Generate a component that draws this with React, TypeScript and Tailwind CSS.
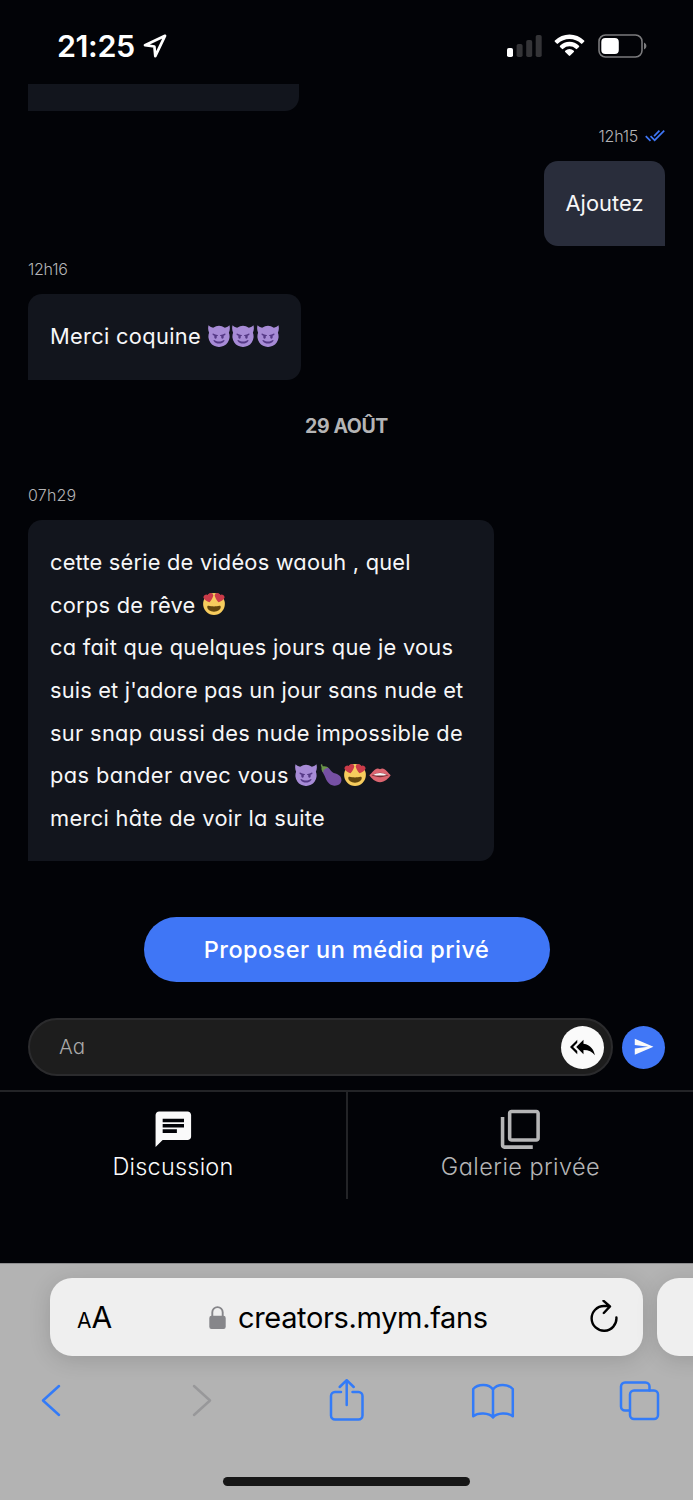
import type { ReactNode } from "react";

function Devil() {
  return (
    <svg viewBox="0 0 36 36" className="size-[22px] shrink-0" role="img" aria-label="😈">
      <path fill="#a78bd6" d="M.9.500C-.2 4.500 0 9 1.800 12.800A17.100 17.100 0 0 0 18 36a17.100 17.100 0 0 0 16.200-23.200C36 9 36.200 4.500 35.100.500 33.500 2.600 31 3.800 27.600 4.300a17.300 17.300 0 0 0-19.200 0C5 3.800 2.500 2.600.9.500z" />
      <path fill="#553986" d="M7.500 15.500c-.4-1.200.7-1.900 1.600-1.200 1.900 1.200 3.800 1.800 6.200 1.900 1.500.2 1.300 1.800-.1 1.800h-.9c.4 2.600-.3 4.500-1.900 4.500s-2.500-1.900-2-5c-1.200-.5-2.500-1-2.900-2zM28.500 15.500c.4-1.200-.7-1.900-1.600-1.200-1.900 1.200-3.800 1.800-6.200 1.900-1.500.2-1.300 1.800.1 1.800h.9c-.4 2.600.3 4.500 1.900 4.500s2.500-1.900 2-5c1.200-.5 2.500-1 2.900-2zM9.300 26c-.8-1.100.3-2 1.400-1.200 4.400 3 10.200 3 14.600 0 1.100-.8 2.200.1 1.400 1.200-4.100 5.700-13.300 5.700-17.400 0z" />
    </svg>
  );
}

function HeartEyes() {
  return (
    <svg viewBox="0 0 36 36" className="size-[22px] shrink-0" role="img" aria-label="😍">
      <circle cx="18" cy="18" r="17.800" fill="#f7cc5d" />
      <path fill="#cb3b49" d="M16.650 3.280C15.790.850 13.120-.430 10.690.430a4.660 4.660 0 0 0-2.810 2.700A4.670 4.670 0 0 0 .740 7.500c.070.280.180.550.310.800 1.040 2.520 5.320 6.200 9.550 6.980 3.200-2.870 5.420-8.060 6.210-10.590a4.690 4.690 0 0 0-.160-1.410zM19.350 3.280C20.210.850 22.880-.430 25.310.430a4.660 4.660 0 0 1 2.810 2.700 4.670 4.670 0 0 1 7.140 4.370c-.070.280-.180.550-.310.800-1.040 2.520-5.320 6.200-9.550 6.980-3.200-2.870-5.420-8.060-6.210-10.590a4.690 4.690 0 0 1 .160-1.410z" />
      <path fill="#63460d" d="M18 22c-3.620 0-6.030-.420-9-1-.680-.130-2 0-2 2 0 4 4.600 7.500 11 7.500s11-3.500 11-7.500c0-2-1.320-2.130-2-2-2.970.580-5.380 1-9 1z" />
    </svg>
  );
}

function Eggplant() {
  return (
    <svg viewBox="0 0 36 36" className="size-[22px] shrink-0" role="img" aria-label="🍆">
      <path fill="#7650a4" d="M3.500 7.500C7 3.500 13 3.800 16 8.500c2.500 4 5 5.800 9.500 7C32 17.300 36 22 35 28c-1 5.500-6 8-12 7.500-8-.7-12.500-8-15-15C6.500 16.500 2 12 3.500 7.500z" />
      <path fill="#6a9549" d="M1.600.8C2.800-.2 4.200.6 4 2c-.1.900.2 1.700 1.300 1.800 4-.5 7.200.6 8.500 3.200-2.500-.8-4-.1-5.200 1.300-.8 1-1.600 1-2.300.3-.6 1.600-1 3.500-.2 5.400C3.500 12.700 2 10 2.500 6.500 2.800 4.500.6 2.500 1.600.8z" />
    </svg>
  );
}

function Lips() {
  return (
    <svg viewBox="0 0 36 36" className="size-[22px] shrink-0" role="img" aria-label="👄">
      <path fill="#dc6570" d="M.5 18.500C5 14.500 9.500 7.500 14 7.500c1.500 0 2.800.8 4 1.200 1.200-.4 2.500-1.200 4-1.200 4.500 0 9 7 13.500 11-4 5-9.500 11.500-17.500 11.500S4.500 23.500.5 18.500z" />
      <path fill="#7c2a32" d="M4 18.500c4.500-1.500 9-4 14-4s9.500 2.500 14 4c-4.500 1.300-9 3.300-14 3.300s-9.500-2-14-3.300z" />
      <path fill="#f5f5f5" d="M6.500 17.800c3.800-1.300 7.500-3 11.500-3s7.700 1.700 11.500 3c-7 1.300-16 1.300-23 0z" />
    </svg>
  );
}

function StatusBar() {
  return (
    <header className="flex h-[84px] shrink-0 items-start justify-between pl-[57px] pr-[46px] pt-[27px]">
      <div className="flex items-center gap-2">
        <span className="text-[30.500px] font-semibold leading-[37px] tracking-[-0.400px] text-white">21:25</span>
        <svg viewBox="0 0 24 24" className="size-[24px]" fill="none" stroke="#fff" strokeWidth="2.700" strokeLinejoin="round">
          <path d="M22 1.800 2 11.200l9.400 1.300.9 9.700z" />
        </svg>
      </div>
      <div className="flex h-[24px] items-start pt-[7px]">
        <svg viewBox="0 0 35 24" className="mr-[12px] h-[24px] w-[35px]">
          <rect x="0" y="14" width="6" height="9" rx="1.800" fill="#fff" />
          <rect x="9.600" y="10" width="6" height="13" rx="1.800" fill="#343437" />
          <rect x="19.200" y="6" width="6" height="17" rx="1.800" fill="#343437" />
          <rect x="28.700" y="1" width="6" height="22" rx="1.800" fill="#343437" />
        </svg>
        <svg viewBox="0 0 31 24" className="mr-[13px] h-[24px] w-[31px]" fill="#fff">
          <path d="M.9 7.800a1 1 0 0 1 0-1.300 20.800 20.800 0 0 1 29.200 0 1 1 0 0 1 0 1.300l-1.800 1.800a.9.900 0 0 1-1.300 0 16.600 16.600 0 0 0-23 0 .9.900 0 0 1-1.300 0z" />
          <path d="M6 13a1 1 0 0 1 0-1.300 13.600 13.600 0 0 1 19 0A1 1 0 0 1 25 13l-1.900 1.800a.9.900 0 0 1-1.300 0 9.200 9.200 0 0 0-12.600 0 .9.900 0 0 1-1.300 0z" />
          <path d="M11.200 18.100a.9.900 0 0 1 0-1.300 6.300 6.300 0 0 1 8.600 0 .9.900 0 0 1 0 1.300l-3.600 3.500a1 1 0 0 1-1.400 0z" />
        </svg>
        <svg viewBox="0 0 49 24" className="h-[24px] w-[49px]">
          <rect x="1" y="1" width="43" height="22" rx="6.500" fill="none" stroke="#7b7b7d" strokeWidth="1.600" />
          <rect x="3.300" y="4" width="17.500" height="16" rx="4" fill="#fff" />
          <path d="M46 8.500c3.200 1.500 3.200 5.500 0 7z" fill="#7b7b7d" />
        </svg>
      </div>
    </header>
  );
}

function Time({ children }: { children: ReactNode }) {
  return <span className="text-[16px] font-[350] leading-6 text-[#b4b4b6]">{children}</span>;
}

function Tool({ children, className }: { children: ReactNode; className: string }) {
  return (
    <button className={className}>
      <svg viewBox="0 0 44 44" className="size-[44px]" fill="none" stroke="#337bf8" strokeWidth="2.500" strokeLinecap="round" strokeLinejoin="round">
        {children}
      </svg>
    </button>
  );
}

export default function App() {
  return (
    <div className="flex h-[1500px] w-[693px] flex-col overflow-hidden bg-[#020307] font-['Inter',sans-serif]">
      <StatusBar />

      <main className="flex h-[777px] shrink-0 flex-col items-start px-[28px] text-[21.800px] leading-[42.670px] text-[#f7f7f8] [font-feature-settings:'cv11']">
        <div className="h-[27px] w-[271px] shrink-0 rounded-br-[14px] bg-[#12151d]" />

        <div className="flex h-[50px] shrink-0 items-center gap-[7px] self-end">
          <Time>
            <span className="tracking-[-0.250px]">12h15</span>
          </Time>
          <svg viewBox="0.400 5.500 23.300 13.600" className="h-[11.500px] w-[20px]" fill="#3f76f6">
            <path d="M18 7l-1.410-1.410-6.340 6.340 1.410 1.410L18 7zm4.240-1.410L11.660 16.170 7.480 12l-1.410 1.410L11.660 19l12-12-1.420-1.410zM.410 13.410L6 19l1.410-1.410L1.830 12 .410 13.410z" />
          </svg>
        </div>
        <div className="h-[85px] w-[121px] shrink-0 self-end rounded-[14px] rounded-br-none bg-[#292d3b] py-[21px] text-center">
          <span className="tracking-[0.050px]">Ajoutez</span>
        </div>

        <div className="flex h-[48px] shrink-0 items-center pb-[2px]">
          <Time>
            <span className="tracking-[-0.250px]">12h16</span>
          </Time>
        </div>
        <div className="flex h-[86px] w-[273px] shrink-0 items-center gap-[2.400px] rounded-[14px] rounded-bl-none bg-[#12151d] pb-[1px] pl-[22px]">
          <span className="mr-[4.500px] w-[151px] whitespace-nowrap tracking-[0.330px]">Merci coquine</span>
          <span className="flex gap-[2.400px] pb-[2px]">
            <Devil />
            <Devil />
            <Devil />
          </span>
        </div>

        <div className="flex h-[93px] shrink-0 items-center self-center pb-[1px] text-[19.500px] font-bold leading-7 tracking-[-0.400px] text-[#b4b4b5]">
          29 AOÛT
        </div>

        <div className="flex h-[47px] shrink-0 items-center pb-[3px]">
          <Time>
            <span className="tracking-[0.200px]">07h29</span>
          </Time>
        </div>
        <div className="h-[341px] w-[466px] shrink-0 whitespace-nowrap rounded-[14px] rounded-bl-none bg-[#12151d] pl-[22px] pt-[21px]">
          <p className="tracking-[0.220px]">cette série de vidéos waouh , quel</p>
          <p className="flex items-center">
            <span className="w-[153px] tracking-[0.280px]">corps de rêve</span>
            <span className="pb-[2px]">
              <HeartEyes />
            </span>
          </p>
          <p className="tracking-[0.280px]">ca fait que quelques jours que je vous</p>
          <p className="tracking-[0.180px]">suis et j'adore pas un jour sans nude et</p>
          <p className="tracking-[0.330px]">sur snap aussi des nude impossible de</p>
          <p className="flex items-center">
            <span className="w-[245px] tracking-[0.440px]">pas bander avec vous</span>
            <span className="flex gap-[2.500px] pb-[2px]">
              <Devil />
              <Eggplant />
              <HeartEyes />
              <Lips />
            </span>
          </p>
          <p className="tracking-[0.330px]">merci hâte de voir la suite</p>
        </div>
      </main>

      <section className="flex shrink-0 flex-col items-center pt-[56px] [font-feature-settings:'cv11']">
        <button className="h-[65px] w-[406px] rounded-full bg-[#3f76f6] pt-[1px] text-[23.500px] font-medium tracking-[0.420px] text-white">
          Proposer un média privé
        </button>
        <div className="mt-[36px] flex h-[58px] w-[637px] items-center justify-between">
          <div className="flex h-[58px] w-[585px] items-center justify-between rounded-full border-2 border-[#2b2b2d] bg-[#1d1d1d] pl-[29px] pr-[7px]">
            <span className="text-[20.500px] font-light text-[#a9a9a9]">Aa</span>
            <button className="flex size-[43px] items-center justify-center rounded-full bg-[#fafafa]">
              <svg viewBox="0 0.500 24 24" className="size-[24.900px]" fill="#000">
                <path d="M7 8V5l-7 7 7 7v-3l-4-4 4-4zm6 1V5l-7 7 7 7v-4.100c5 0 8.500 1.600 11 5.100-1-5-4-10-11-11z" />
              </svg>
            </button>
          </div>
          <button className="flex size-[43px] items-center justify-center rounded-full bg-[#3f76f6]">
            <svg viewBox="0 0 24 24" className="size-[21.330px]" fill="#fafafa">
              <path d="M2.010 21L23 12 2.010 3 2 10l15 2-15 2z" />
            </svg>
          </button>
        </div>
      </section>

      <nav className="mt-[14px] flex h-[109px] shrink-0 border-t-2 border-[#232427] text-[23.500px] font-[350] leading-8 [font-feature-settings:'cv11']">
        <div className="flex w-[348px] flex-col items-center border-r-2 border-[#232427] pt-[16px] text-[#fafafa]">
          <svg viewBox="0 0 24 24" className="size-[42.670px]" fill="currentColor">
            <path d="M20 2H4c-1.100 0-1.990.9-1.990 2L2 22l4-4h14c1.100 0 2-.9 2-2V4c0-1.100-.9-2-2-2zM6 9h12v2H6V9zm8 5H6v-2h8v2zm4-6H6V6h12v2z" />
          </svg>
          <span className="tracking-[0.200px]">Discussion</span>
        </div>
        <div className="flex w-[345px] flex-col items-center pt-[16px] text-[#b5b5b6]">
          <svg viewBox="0 0 24 24" className="size-[42.670px]" fill="currentColor">
            <path d="M3 5H1v16c0 1.100.9 2 2 2h16v-2H3V5zm18-4H7c-1.100 0-2 .9-2 2v14c0 1.100.9 2 2 2h14c1.100 0 2-.9 2-2V3c0-1.100-.9-2-2-2zm0 16H7V3h14v14z" />
          </svg>
          <span className="tracking-[0.430px]">Galerie privée</span>
        </div>
      </nav>

      <footer className="mt-[64px] flex flex-1 flex-col border-t border-[#8d8d8f] bg-[#b3b3b3]">
        <div className="mt-[14px] flex gap-[14px] pl-[50px]">
          <div className="flex h-[78px] w-[593px] shrink-0 items-center rounded-[22px] bg-[#efefef] pl-[27px] pr-[22px] text-black shadow-[0_4px_22px_rgba(0,0,0,0.140)]">
            <span className="flex w-[132px] items-baseline">
              <span className="text-[21px]">A</span>
              <span className="text-[30px]">A</span>
            </span>
            <svg viewBox="0 0 17 23" className="h-[23px] w-[17px]">
              <path d="M3.300 11V6.300a5.200 5.200 0 0 1 10.400 0V11" fill="none" stroke="#86868a" strokeWidth="1.900" />
              <rect x="0.300" y="9.700" width="16.400" height="13.300" rx="2.200" fill="#86868a" />
            </svg>
            <span className="ml-[12px] flex-1 pt-[2px] text-[29px] tracking-[-0.350px]">creators.mym.fans</span>
            <svg viewBox="0 0 34 34" className="size-[34px]" fill="none" stroke="#000" strokeWidth="2.400" strokeLinecap="round" strokeLinejoin="round">
              <path d="M29.400 17.500A12.400 12.400 0 1 1 17 6h5.500M16.500 0.800 23 6.400l-6.200 6.600" />
            </svg>
          </div>
          <div className="h-[78px] w-[80px] shrink-0 rounded-[22px] bg-[#efefef] shadow-[0_4px_22px_rgba(0,0,0,0.140)]" />
        </div>

        <div className="mt-[23px] flex pl-[29px]">
          <Tool className="mr-[107px]">
            <path d="M30 7 14 21.500 30 36" />
          </Tool>
          <Tool className="mr-[101px]">
            <path stroke="#98989a" d="M14 7l16 14.500L14 36" />
          </Tool>
          <Tool className="mr-[102px]">
            <path d="M16 13h-6a4 4 0 0 0-4 4v19.500a4 4 0 0 0 4 4h23.500a4 4 0 0 0 4-4V17a4 4 0 0 0-4-4h-6M21.700 26V1.500M14.700 8l7-6.800 7 6.800" />
          </Tool>
          <Tool className="mr-[103px]">
            <path d="M22 10.500C18 4.500 7 4.500 2.200 10v27.200C7 33.500 18 33.500 22 38.500c4-5 15-5 19.800-1.300V10C37 4.500 26 4.500 22 10.500zM22 10.500v28" />
          </Tool>
          <Tool className="">
            <path d="M11 31.500H7a4 4 0 0 1-4-4v-20a4 4 0 0 1 4-4h20.500a4 4 0 0 1 4 4v4" />
            <rect x="12" y="11.500" width="28" height="28.500" rx="4" />
          </Tool>
        </div>

        <div className="mt-auto mb-[14px] h-[9px] w-[247px] self-center rounded-full bg-[#171717]" />
      </footer>
    </div>
  );
}
